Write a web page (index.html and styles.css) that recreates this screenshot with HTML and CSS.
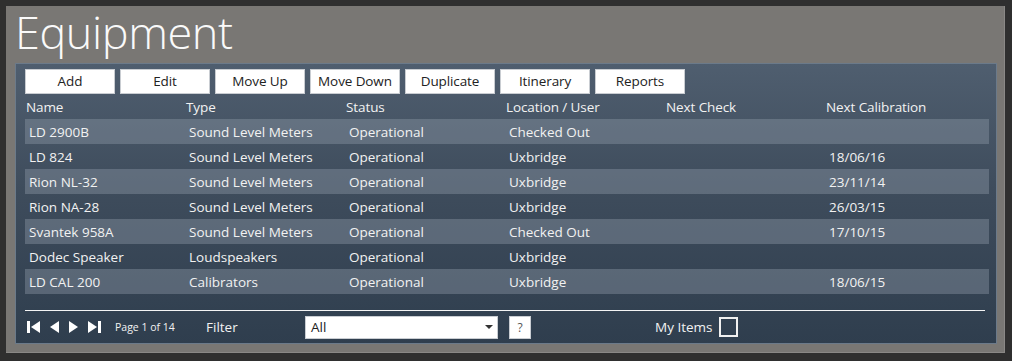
FILE: index.html
```html
<!DOCTYPE html>
<html>
<head>
<meta charset="utf-8">
<link rel="stylesheet" href="styles.css">
</head>
<body>
<div class="frame">
  <h1 class="title">Equipment</h1>
  <div class="panel">
    <div class="toolbar">
      <button class="btn">Add</button>
      <button class="btn">Edit</button>
      <button class="btn">Move Up</button>
      <button class="btn">Move Down</button>
      <button class="btn">Duplicate</button>
      <button class="btn">Itinerary</button>
      <button class="btn">Reports</button>
    </div>
    <div class="grid head">
      <div>Name</div><div>Type</div><div>Status</div><div>Location / User</div><div>Next Check</div><div>Next Calibration</div>
    </div>
    <div class="rows">
      <div class="grid row alt"><div>LD 2900B</div><div>Sound Level Meters</div><div>Operational</div><div>Checked Out</div><div></div><div></div></div>
      <div class="grid row"><div>LD 824</div><div>Sound Level Meters</div><div>Operational</div><div>Uxbridge</div><div></div><div>18/06/16</div></div>
      <div class="grid row alt"><div>Rion NL-32</div><div>Sound Level Meters</div><div>Operational</div><div>Uxbridge</div><div></div><div>23/11/14</div></div>
      <div class="grid row"><div>Rion NA-28</div><div>Sound Level Meters</div><div>Operational</div><div>Uxbridge</div><div></div><div>26/03/15</div></div>
      <div class="grid row alt"><div>Svantek 958A</div><div>Sound Level Meters</div><div>Operational</div><div>Checked Out</div><div></div><div>17/10/15</div></div>
      <div class="grid row"><div>Dodec Speaker</div><div>Loudspeakers</div><div>Operational</div><div>Uxbridge</div><div></div><div></div></div>
      <div class="grid row alt"><div>LD CAL 200</div><div>Calibrators</div><div>Operational</div><div>Uxbridge</div><div></div><div>18/06/15</div></div>
    </div>
    <div class="rule"></div>
    <div class="footer">
      <div class="nav">
        <svg width="14" height="12" viewBox="0 0 14 12"><rect x="0" y="0" width="3" height="12" fill="#fff"/><polygon points="13,0 13,12 4,6" fill="#fff"/></svg>
        <svg width="11" height="12" viewBox="0 0 11 12"><polygon points="10,0 10,12 1,6" fill="#fff"/></svg>
        <svg width="11" height="12" viewBox="0 0 11 12"><polygon points="1,0 1,12 10,6" fill="#fff"/></svg>
        <svg width="14" height="12" viewBox="0 0 14 12"><polygon points="1,0 1,12 10,6" fill="#fff"/><rect x="11" y="0" width="3" height="12" fill="#fff"/></svg>
      </div>
      <span class="page">Page 1 of 14</span>
      <span class="filter">Filter</span>
      <div class="select"><span>All</span><svg width="8" height="4" viewBox="0 0 8 4"><polygon points="0,0 8,0 4,4" fill="#333"/></svg></div>
      <button class="help">?</button>
      <span class="mine">My Items</span>
      <span class="check"></span>
    </div>
  </div>
</div>
</body>
</html>
```

FILE: styles.css
```css
* { box-sizing: border-box; }
html, body { margin: 0; padding: 0; }
body {
  background: #2f2f2f;
  font-family: "Open Sans", "Noto Sans", sans-serif;
  color: #f2f2f2;
  width: 1012px;
  height: 361px;
  overflow: hidden;
}
.frame {
  margin: 6px 0 0 6px;
  width: 999px;
  height: 347px;
  background: #797774;
  border-right: 1px solid #8a8886;
  border-bottom: 1px solid #8a8886;
  padding: 0 0 0 9px;
  display: flex;
  flex-direction: column;
}
.title {
  margin: 0;
  height: 57px;
  font-weight: 300;
  font-size: 45px;
  line-height: 52px;
  color: #fafafa;
  letter-spacing: -0.4px;
  padding-left: 0;
}
.panel {
  width: 982px;
  height: 281px;
  border: 1px solid #6b7a8a;
  background: linear-gradient(#4f5e6f, #3e4c5c 45%, #2f3e4e);
  padding: 5px 0 0 9px;
  display: flex;
  flex-direction: column;
}
.toolbar { display: flex; gap: 5px; height: 25px; }
.btn {
  width: 90px;
  height: 25px;
  margin: 0;
  border: 1px solid #c9cdd2;
  background: #fff;
  font-family: "Open Sans", sans-serif;
  font-size: 13.5px;
  line-height: 21px;
  color: #222;
  padding: 0;
  letter-spacing: -0.1px;
}
.grid {
  display: grid;
  grid-template-columns: 160px 160px 160px 160px 160px 124px;
  width: 964px;
}
.head {
  height: 25px;
  font-size: 13.5px;
  line-height: 25px;
  padding: 1px 0 0 1px;
  letter-spacing: -0.1px;
}
.row {
  height: 25px;
  font-size: 13.5px;
  line-height: 25px;
  padding: 1px 0 0 4px;
}
.row.alt { background: rgba(140, 152, 166, 0.42); }
.rule {
  margin-top: 16px;
  width: 960px;
  height: 1px;
  background: #f4f4f4;
}
.footer {
  display: flex;
  align-items: center;
  height: 36px;
  padding-left: 2px;
  padding-top: 1px;
  font-size: 13.5px;
}
.nav { display: flex; gap: 8px; align-items: center; width: 88px; }
.nav svg { display: block; }
.page { font-size: 10.5px; width: 91px; }
.filter { width: 99px; }
.select {
  width: 193px;
  height: 23px;
  background: #fff;
  border: 1px solid #c9cdd2;
  color: #222;
  display: flex;
  align-items: center;
  justify-content: space-between;
  padding: 0 4px 0 5px;
}
.help {
  margin-left: 11px;
  width: 22px;
  height: 23px;
  padding: 0;
  border: 1px solid #c9cdd2;
  background: #fff;
  color: #555;
  font-family: "Open Sans", sans-serif;
  font-size: 12px;
}
.mine { margin-left: 124px; }
.check {
  margin-left: 6px;
  width: 19px;
  height: 20px;
  border: 2px solid #f0f0f0;
}
```
